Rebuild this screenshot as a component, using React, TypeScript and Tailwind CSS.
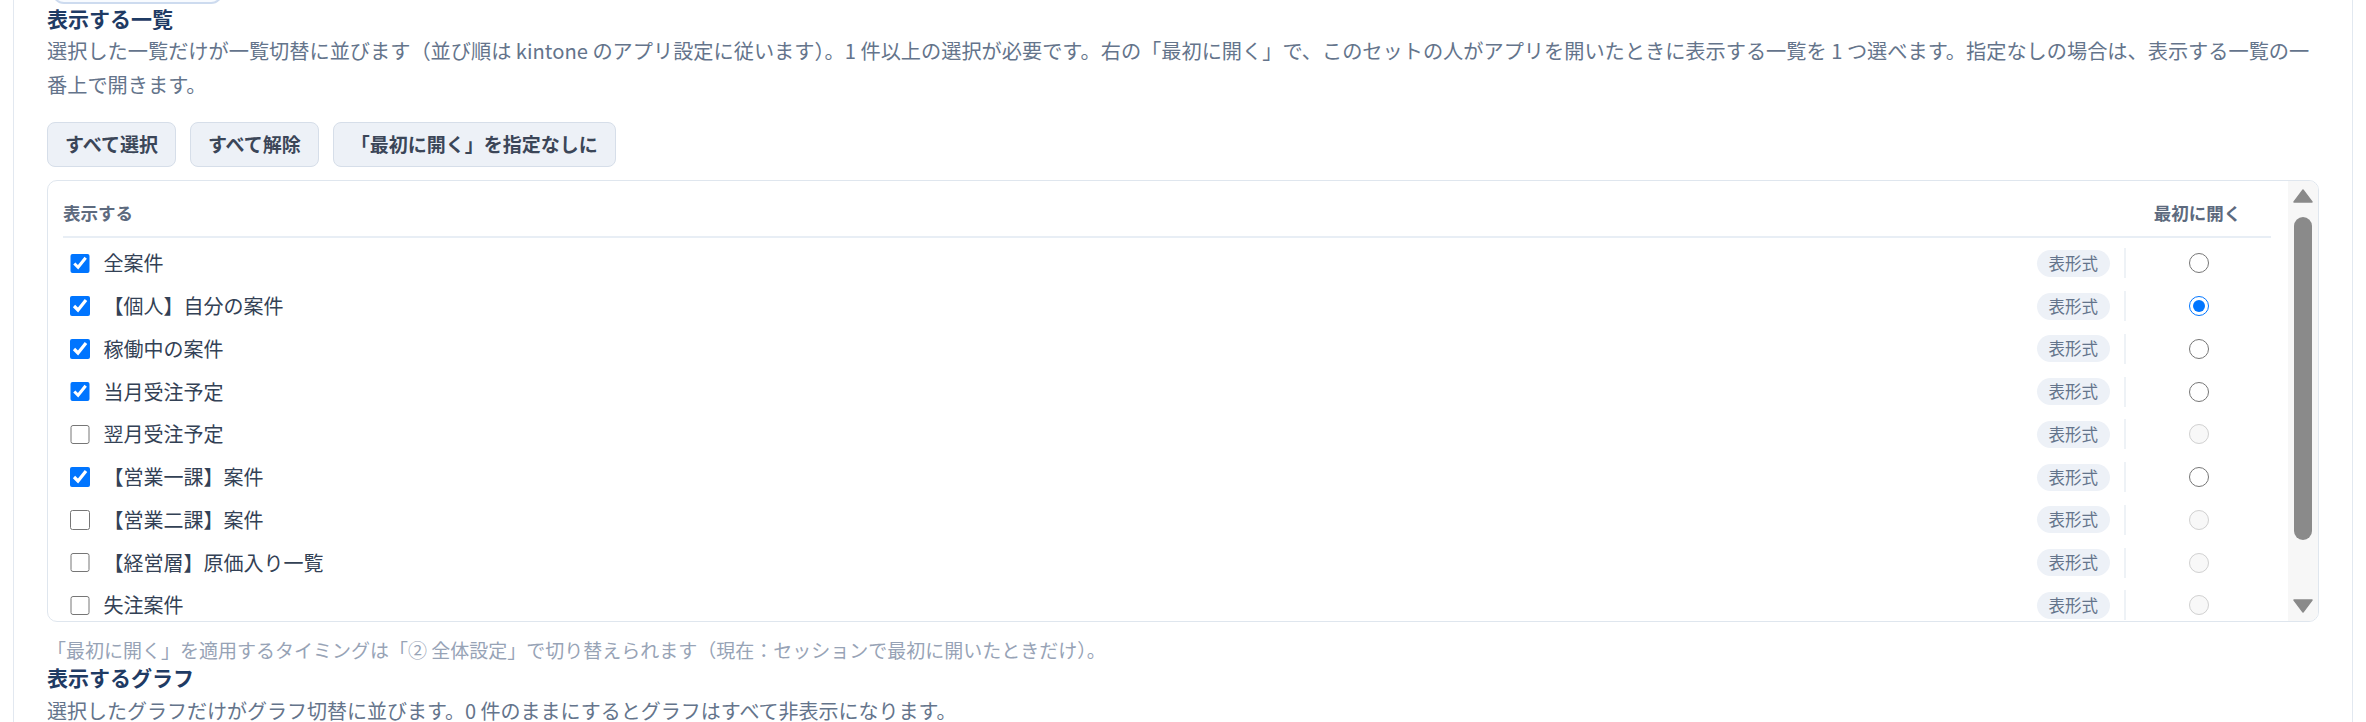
import React from "react";

type Row = { label: string; checked: boolean; radio: "on" | "off" | "disabled" };

const rows: Row[] = [
  { label: "全案件", checked: true, radio: "off" },
  { label: "【個人】自分の案件", checked: true, radio: "on" },
  { label: "稼働中の案件", checked: true, radio: "off" },
  { label: "当月受注予定", checked: true, radio: "off" },
  { label: "翌月受注予定", checked: false, radio: "disabled" },
  { label: "【営業一課】案件", checked: true, radio: "off" },
  { label: "【営業二課】案件", checked: false, radio: "disabled" },
  { label: "【経営層】原価入り一覧", checked: false, radio: "disabled" },
  { label: "失注案件", checked: false, radio: "disabled" },
];

function Arrow({ up }: { up: boolean }) {
  return (
    <svg width="20" height="14" viewBox="0 0 20 14" className="block">
      {up ? (
        <path d="M10 1 L19 13 L1 13 Z" fill="#8a8a8a" stroke="#8a8a8a" strokeWidth="1.5" strokeLinejoin="round" />
      ) : (
        <path d="M1 1 L19 1 L10 13 Z" fill="#8a8a8a" stroke="#8a8a8a" strokeWidth="1.5" strokeLinejoin="round" />
      )}
    </svg>
  );
}

export default function App() {
  return (
    <div className="w-full h-[722px] overflow-hidden bg-white px-[13px] font-['Noto_Sans_CJK_JP',sans-serif]">
      <div className="flex h-full flex-col border-x border-[#e2e8f0] px-[33px]">
        <div className="-mt-[36px] ml-[5px] h-[40px] w-[171px] shrink-0 rounded-[12px] border-2 border-[#cddbef] bg-[#f8fbff]" />
        <h2 className="text-[21px] leading-[28px] font-bold text-[#1f3b64]">表示する一覧</h2>
        <p className="mt-[2px] text-[20.2px] leading-[34px] text-[#64748b]">
          選択した一覧だけが一覧切替に並びます（並び順は kintone のアプリ設定に従います）。1 件以上の選択が必要です。右の「最初に開く」で、このセットの人がアプリを開いたときに表示する一覧を 1 つ選べます。指定なしの場合は、表示する一覧の一番上で開きます。
        </p>
        <div className="mt-[20px] flex gap-[14px]">
          {["すべて選択", "すべて解除", "「最初に開く」を指定なしに"].map((t) => (
            <button
              key={t}
              className="flex h-[45px] items-center rounded-[8px] border border-[#d6dee9] bg-[#edf1f7] px-[17px] text-[19px] font-bold text-[#3b4658]"
            >
              {t}
            </button>
          ))}
        </div>
        <div className="mt-[13px] flex h-[442px] shrink-0 overflow-hidden rounded-[10px] border border-[#dfe6ee]">
          <div className="flex-1 pl-[15px] pr-[17px] pt-[18px]">
            <div className="flex h-[39px] items-start border-b-2 border-[#e8eef5]">
              <div className="flex-1 text-[17.5px] leading-[27px] font-bold text-[#5d6a7e]">表示する</div>
              <div className="w-[147px] text-center text-[17.5px] leading-[27px] font-bold text-[#5d6a7e]">最初に開く</div>
            </div>
            <div className="pt-[4px]">
              {rows.map((r) => (
                <div key={r.label} className="flex h-[42.75px] items-center pl-[7px]">
                  <input
                    type="checkbox"
                    checked={r.checked}
                    readOnly
                    className="m-0 h-[19.5px] w-[19.5px] shrink-0"
                  />
                  <span className="ml-[14px] flex-1 text-[20px] leading-[28px] text-[#334155]">{r.label}</span>
                  <span className="h-[27px] rounded-full bg-[#edf1f7] px-[12px] text-[16.5px] leading-[27px] text-[#64748b]">
                    表形式
                  </span>
                  <div className="ml-[14px] flex h-[30px] w-[147px] items-center justify-center border-l-2 border-[#eef2f6]">
                    <input
                      type="radio"
                      name="first"
                      checked={r.radio === "on"}
                      disabled={r.radio === "disabled"}
                      readOnly
                      className="m-0 h-[20px] w-[20px]"
                    />
                  </div>
                </div>
              ))}
            </div>
          </div>
          <div className="flex w-[30px] flex-col items-center bg-[#f7f7f7] pt-[8px] pb-[8px]">
            <Arrow up />
            <div className="mt-[14px] h-[323px] w-[18px] rounded-full bg-[#8a8a8a]" />
            <div className="flex-1" />
            <Arrow up={false} />
          </div>
        </div>
        <p className="mt-[14px] text-[19px] leading-[27px] text-[#97a3b6]">
          「最初に開く」を適用するタイミングは「② 全体設定」で切り替えられます（現在：セッションで最初に開いたときだけ）。
        </p>
        <h2 className="text-[21px] leading-[28px] font-bold text-[#1f3b64]">表示するグラフ</h2>
        <p className="mt-[3px] text-[20px] leading-[34px] text-[#64748b]">
          選択したグラフだけがグラフ切替に並びます。0 件のままにするとグラフはすべて非表示になります。
        </p>
      </div>
    </div>
  );
}
